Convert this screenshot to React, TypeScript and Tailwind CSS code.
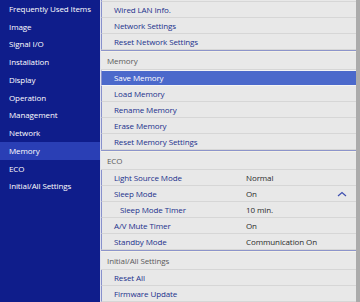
import React from "react";

const sideItems = [
  "Frequently Used Items",
  "Image",
  "Signal I/O",
  "Installation",
  "Display",
  "Operation",
  "Management",
  "Network",
  "Memory",
  "ECO",
  "Initial/All Settings",
];

type Row = { label: string; value?: string; sub?: boolean; active?: boolean; chevron?: boolean };

const Item = ({ label, value, sub, active, chevron }: Row) => (
  <div
    className={
      active
        ? "h-[16px] flex items-center border-l border-[#8891cc] bg-[#4b69cb] text-white border-y border-y-[#f4f4f4]"
        : "h-[16px] flex items-center border-l border-[#8891cc] border-b border-b-[#d6d6d6] bg-[#e8e8e8] text-[#22308c]"
    }
  >
    <span className={sub ? "pl-[18px] w-[144px]" : "pl-[12px] w-[144px]"}>{label}</span>
    {value && <span className="text-[#2a2a2a]">{value}</span>}
    {chevron && (
      <svg className="ml-auto mr-[9px]" width="10" height="6" viewBox="0 0 10 6">
        <polyline points="1,5 5,1.5 9,5" fill="none" stroke="#3e4fb0" strokeWidth="1.2" />
      </svg>
    )}
  </div>
);

const Header = ({ label }: { label: string }) => (
  <div className="h-[20px] flex flex-col border-t border-[#8d95cb] bg-[#e9e9e9]">
    <div className="h-px bg-[#f5f2e6]" />
    <div className="flex-1 flex items-center pl-[6px] text-[#5a5a5a] border-b border-[#d6d6d6]">{label}</div>
  </div>
);

export default function App() {
  return (
    <div
      className="w-[360px] h-[302px] overflow-hidden flex text-[8px] leading-none font-medium tracking-[-0.1px]"
      style={{ fontFamily: '"Open Sans", "Noto Sans", sans-serif' }}
    >
      <div className="w-[100px] h-full bg-[#0f1d8b] text-white flex flex-col">
        {sideItems.map((s) => (
          <div
            key={s}
            className={
              s === "Memory"
                ? "h-[17.75px] flex items-center pl-[9px] bg-[#2a3fb5]"
                : "h-[17.75px] flex items-center pl-[9px]"
            }
          >
            {s}
          </div>
        ))}
      </div>
      <div className="flex-1 h-full flex border-l border-[#dfe1ee] bg-[#e8e8e8]">
        <div className="flex-1 flex flex-col">
          <div className="h-[2px] border-b border-[#d6d6d6] border-l border-l-[#8891cc]" />
          <Item label="Wired LAN Info." />
          <Item label="Network Settings" />
          <Item label="Reset Network Settings" />
          <Header label="Memory" />
          <Item label="Save Memory" active />
          <Item label="Load Memory" />
          <Item label="Rename Memory" />
          <Item label="Erase Memory" />
          <Item label="Reset Memory Settings" />
          <Header label="ECO" />
          <Item label="Light Source Mode" value="Normal" />
          <Item label="Sleep Mode" value="On" chevron />
          <Item label="Sleep Mode Timer" value="10 min." sub />
          <Item label="A/V Mute Timer" value="On" />
          <Item label="Standby Mode" value="Communication On" />
          <Header label="Initial/All Settings" />
          <Item label="Reset All" />
          <Item label="Firmware Update" />
        </div>
        <div className="w-[4px] h-full bg-[#ababab]" />
      </div>
    </div>
  );
}
